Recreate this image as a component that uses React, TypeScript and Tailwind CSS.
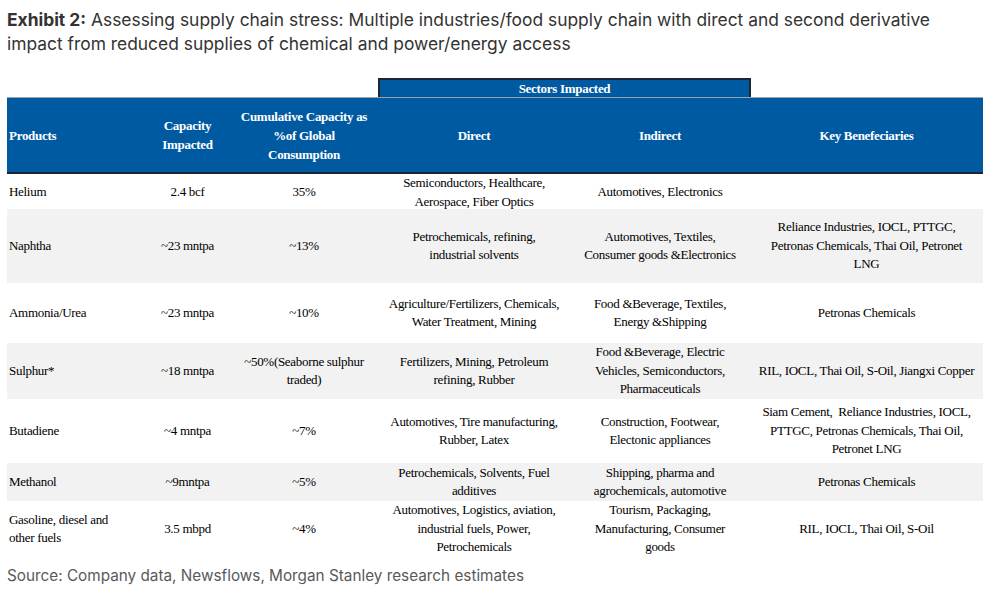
import React from "react";

type Row = {
  p: React.ReactNode;
  cap: string;
  cum: React.ReactNode;
  direct: React.ReactNode;
  indirect: React.ReactNode;
  key: React.ReactNode;
  h: string;
  gray: boolean;
};

const rows: Row[] = [
  { p: "Helium", cap: "2.4 bcf", cum: "35%", direct: <>Semiconductors, Healthcare,<br />Aerospace, Fiber Optics</>, indirect: "Automotives, Electronics", key: "", h: "h-[35px]", gray: false },
  { p: "Naphtha", cap: "~23 mntpa", cum: "~13%", direct: <>Petrochemicals, refining,<br />industrial solvents</>, indirect: <>Automotives, Textiles,<br />Consumer goods &amp;Electronics</>, key: <>Reliance Industries, IOCL, PTTGC,<br />Petronas Chemicals, Thai Oil, Petronet<br />LNG</>, h: "h-[74px]", gray: true },
  { p: "Ammonia/Urea", cap: "~23 mntpa", cum: "~10%", direct: <>Agriculture/Fertilizers, Chemicals,<br />Water Treatment, Mining</>, indirect: <>Food &amp;Beverage, Textiles,<br />Energy &amp;Shipping</>, key: "Petronas Chemicals", h: "h-[60px]", gray: false },
  { p: "Sulphur*", cap: "~18 mntpa", cum: <>~50%(Seaborne sulphur<br />traded)</>, direct: <>Fertilizers, Mining, Petroleum<br />refining, Rubber</>, indirect: <>Food &amp;Beverage, Electric<br />Vehicles, Semiconductors,<br />Pharmaceuticals</>, key: "RIL, IOCL, Thai Oil, S-Oil, Jiangxi Copper", h: "h-[56px]", gray: true },
  { p: "Butadiene", cap: "~4 mntpa", cum: "~7%", direct: <>Automotives, Tire manufacturing,<br />Rubber, Latex</>, indirect: <>Construction, Footwear,<br />Electonic appliances</>, key: <>Siam Cement,&nbsp; Reliance Industries, IOCL,<br />PTTGC, Petronas Chemicals, Thai Oil,<br />Petronet LNG</>, h: "h-[64px]", gray: false },
  { p: "Methanol", cap: "~9mntpa", cum: "~5%", direct: <>Petrochemicals, Solvents, Fuel<br />additives</>, indirect: <>Shipping, pharma and<br />agrochemicals, automotive</>, key: "Petronas Chemicals", h: "h-[38px]", gray: true },
  { p: <>Gasoline, diesel and<br />other fuels</>, cap: "3.5 mbpd", cum: "~4%", direct: <>Automotives, Logistics, aviation,<br />industrial fuels, Power,<br />Petrochemicals</>, indirect: <>Tourism, Packaging,<br />Manufacturing, Consumer<br />goods</>, key: "RIL, IOCL, Thai Oil, S-Oil", h: "h-[56px]", gray: false },
];

const grid = "grid grid-cols-[138px_85px_148px_192px_180px_233px]";

export default function App() {
  return (
    <div className="w-[1000px] h-[598px] bg-white overflow-hidden">
      <div className="w-[960px] pl-[7px] pt-[8px] text-[17.4px] leading-[24px] text-[#333333] [font-family:Inter,sans-serif]">
        <span className="font-bold">Exhibit 2:</span> Assessing supply chain stress: Multiple industries/food supply chain with direct and second derivative impact from reduced supplies of chemical and power/energy access
      </div>

      <div className="ml-[7px] mt-[22px] w-[976px] [font-family:'Liberation_Serif',serif] text-[13px] text-black tracking-[-0.3px]">
        <div className={grid}>
          <div className="col-start-4 col-span-2 h-[19px] mr-[-1px] bg-[#005aa2] border-t-2 border-l-2 border-r-2 border-[#1c2530] flex items-center justify-center font-bold text-white leading-none">
            Sectors Impacted
          </div>
        </div>
        <div className={`${grid} h-[77px] bg-[#005aa2] border-t border-[#9aa4ad] border-b-2 border-b-[#1c2530] font-bold text-white leading-[19px]`}>
          <div className="flex items-center pl-[2px]">Products</div>
          <div className="flex items-center justify-center text-center">Capacity<br />Impacted</div>
          <div className="flex items-center justify-center text-center">Cumulative Capacity as<br />%of Global<br />Consumption</div>
          <div className="flex items-center justify-center text-center">Direct</div>
          <div className="flex items-center justify-center text-center">Indirect</div>
          <div className="flex items-center justify-center text-center">Key Benefeciaries</div>
        </div>
        {rows.map((r, i) => (
          <div key={i} className={`${grid} ${r.h} ${r.gray ? "bg-[#f2f2f2]" : "bg-white"} leading-[18.5px]`}>
            <div className="flex items-center pl-[2px]">{r.p}</div>
            <div className="flex items-center justify-center text-center">{r.cap}</div>
            <div className="flex items-center justify-center text-center">{r.cum}</div>
            <div className="flex items-center justify-center text-center">{r.direct}</div>
            <div className="flex items-center justify-center text-center">{r.indirect}</div>
            <div className="flex items-center justify-center text-center">{r.key}</div>
          </div>
        ))}
      </div>

      <div className="px-[7px] mt-[8px] text-[15.3px] leading-[22px] text-[#595959] [font-family:Inter,sans-serif]">
        Source: Company data, Newsflows, Morgan Stanley research estimates
      </div>
    </div>
  );
}
